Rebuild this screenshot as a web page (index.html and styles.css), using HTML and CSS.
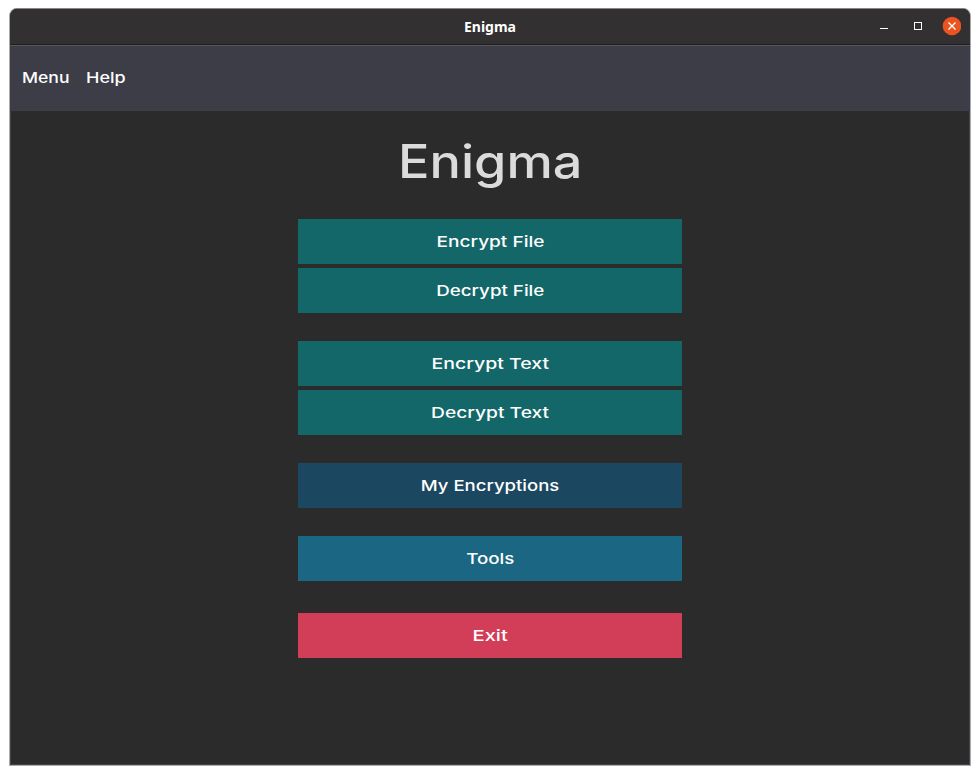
FILE: index.html
```
<!DOCTYPE html>
<html lang="en">
<head>
<meta charset="utf-8">
<title>Enigma</title>
<link rel="stylesheet" href="styles.css">
</head>
<body>
<div class="window">
  <header class="titlebar">
    <span class="caption">Enigma</span>
    <svg class="controls" width="90" height="24" viewBox="0 0 90 24" fill="none">
      <path d="M9 14.5h8" stroke="#fff"/>
      <rect x="43.5" y="8.5" width="7" height="7" stroke="#fff"/>
      <circle cx="81" cy="12" r="9.3" fill="#e95420"/>
      <path d="M77.500 8.500l7 7m0-7l-7 7" stroke="#fff" stroke-width="1.3"/>
    </svg>
  </header>
  <nav class="menubar">
    <span class="menu-item menu">Menu</span>
    <span class="menu-item help">Help</span>
  </nav>
  <main class="content">
    <h1><span>Enigma</span></h1>
    <button class="teal"><span class="encrypt-file">Encrypt File</span></button>
    <button class="teal"><span class="decrypt-file">Decrypt File</span></button>
    <button class="teal gap"><span class="encrypt-text">Encrypt Text</span></button>
    <button class="teal"><span class="decrypt-text">Decrypt Text</span></button>
    <button class="navy gap"><span class="encryptions">My Encryptions</span></button>
    <button class="blue gap"><span class="tools">Tools</span></button>
    <button class="red gap-wide"><span class="exit">Exit</span></button>
  </main>
</div>
</body>
</html>
```
FILE: styles.css
```
* { box-sizing: border-box; }
body {
  margin: 0;
  padding: 8px 9px 9px;
  height: 775px;
  background: #fff;
  overflow: hidden;
  font-family: Inter, "Noto Sans", sans-serif;
}
.window {
  height: 758px;
  display: flex;
  flex-direction: column;
  border: 1px solid #aaaaac;
  border-top-color: #868686;
  border-radius: 8px 8px 0 0;
  overflow: hidden;
  background: #2b2b2b;
}
.titlebar {
  flex: none;
  height: 36px;
  display: grid;
  grid-template-columns: 90px 1fr 90px;
  align-items: center;
  padding: 0 9px;
  background: #323030;
  border-bottom: 1px solid #1f1e1e;
}
.caption {
  grid-column: 2;
  text-align: center;
  color: #fff;
  font: 700 14px/20px "Noto Sans", sans-serif;
}
.controls { margin-top: -1px; }
.menubar {
  flex: none;
  height: 66px;
  display: flex;
  align-items: center;
  padding: 0 0 2px 12px;
  background: #3d3d47;
  border-top: 1px solid #57575e;
}
.menu-item {
  color: #fff;
  font-size: 15px;
  font-weight: 500;
  line-height: 20px;
  white-space: nowrap;
  transform-origin: left;
}
.menu { width: 64px; transform: scaleX(1.17); }
.help { transform: scaleX(1.2); }
.content {
  flex: 1;
  display: flex;
  flex-direction: column;
  align-items: center;
  border: solid #43434b;
  border-width: 0 1px 1px;
}
h1 {
  margin: 21px 0 27px;
  height: 60px;
  font-size: 46px;
  font-weight: 500;
  line-height: 59px;
  color: #dbdbdb;
}
h1 span { display: inline-block; transform: scaleX(1.135); }
button {
  flex: none;
  width: 384px;
  height: 45px;
  margin: 0 0 4px;
  padding: 0;
  border: 0;
  color: #fff;
  font: 500 15px/45px Inter, "Noto Sans", sans-serif;
}
button span { display: inline-block; transform: scaleX(1.25); }
button .encrypt-file { transform: scaleX(1.27); }
button .encrypt-text { transform: scaleX(1.3); }
button .decrypt-text { transform: scaleX(1.28); }
button .encryptions { transform: scaleX(1.235); }
button .exit { transform: scaleX(1.34); }
.teal { background: #136769; }
.navy { background: #1b4860; }
.blue { background: #1b6682; }
.red { background: #d23d58; }
.gap { margin-top: 24px; }
.gap-wide { margin-top: 28px; }
```
